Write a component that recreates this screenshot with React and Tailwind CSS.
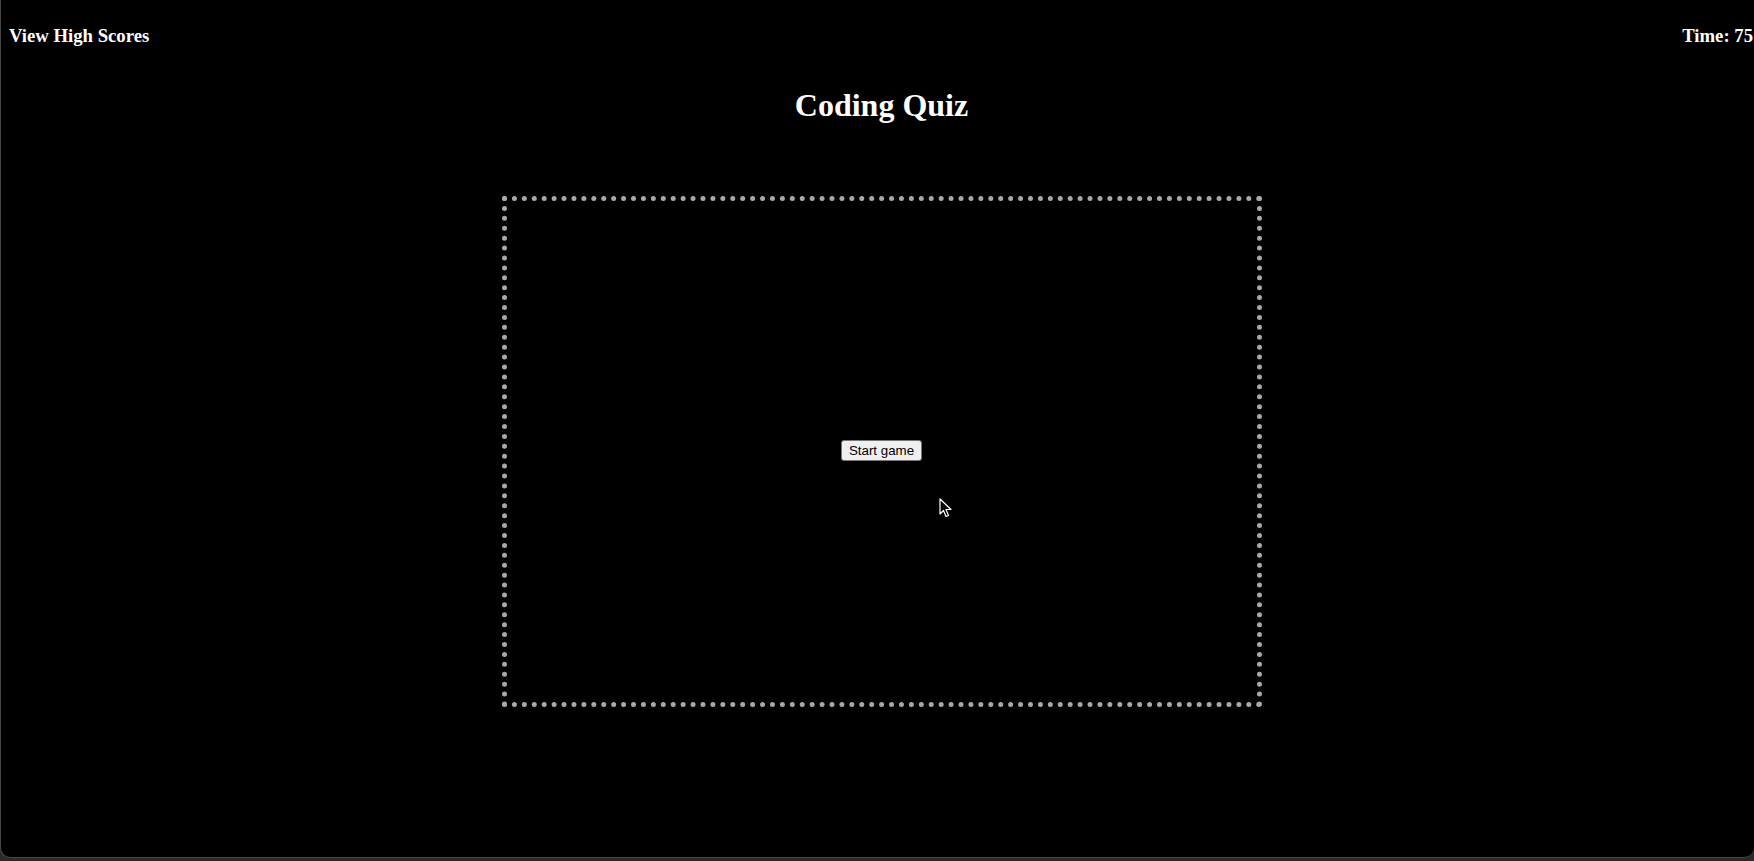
import React from 'react';

function Cursor() {
  return (
    <svg
      className="absolute left-[938px] top-[498px]"
      width="13"
      height="20"
      viewBox="0 0 13 20"
    >
      <path
        d="M1 1 L1 16 L4.5 12.5 L7 18.5 L9.5 17.5 L7 11.5 L12 11.5 Z"
        fill="#000"
        stroke="#fff"
        strokeWidth="1.2"
        strokeLinejoin="round"
      />
    </svg>
  );
}

export default function App() {
  return (
    <div className="h-[861px] w-full bg-[#2a2a2a] overflow-hidden">
      <div className="relative h-[858px] bg-black border-l border-b border-[#464646] rounded-bl-[10px] rounded-br-[10px] flex flex-col pl-2 text-white font-['Liberation_Serif',serif]">
        <header className="flex items-start justify-between pt-[26px]">
          <h3 className="text-[18.72px] font-bold leading-[20.7px]">View High Scores</h3>
          <h3 className="text-[18.72px] font-bold leading-[20.7px] pr-[1px]">Time: 75</h3>
        </header>

        <h1 className="mt-[41px] text-center text-[32px] font-bold leading-[35.4px]">Coding Quiz</h1>

        <main className="mt-[73px] flex justify-center">
          <div className="w-[760px] h-[511px] border-[5px] border-dotted border-[#a9a9a9] flex items-center justify-center">
            <button className="-mt-[2px] bg-[#efefef] text-black border border-[#767676] rounded-[3px] px-[7px] py-[2px] text-[13.33px] leading-[15px] font-['Liberation_Sans',Arial,sans-serif]">
              Start game
            </button>
          </div>
        </main>

        <Cursor />
      </div>
    </div>
  );
}
